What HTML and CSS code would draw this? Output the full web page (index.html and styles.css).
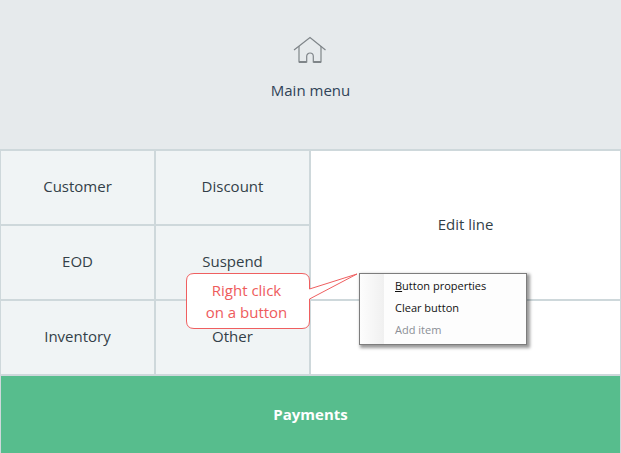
FILE: index.html
```html
<!DOCTYPE html>
<html lang="en">
<head>
  <meta charset="UTF-8" />
  <title>Button layout</title>
  <link rel="stylesheet" href="styles.css">
</head>
<body>

  <div class="grid">
    <div class="tile tile-main">
      <svg class="icono-casa" width="35" height="28" viewBox="0 0 35 28" fill="none">
        <path d="M1 14 L17 1.5 L32.5 14" stroke="#7f8589" stroke-width="1.2"/>
        <path d="M6 10 V26 H13.7 V20.3 A3.3 3.3 0 0 1 20.3 20.3 V26 H28 V10" stroke="#7f8589" stroke-width="1.2"/>
        <path d="M6 26 H13.7 M20.3 26 H28" stroke="#7f8589" stroke-width="1.8"/>
      </svg>
      <span class="tile-label">Main menu</span>
    </div>
    <div class="tile">Customer</div>
    <div class="tile">Discount</div>
    <div class="tile tile-edit">Edit line</div>
    <div class="tile">EOD</div>
    <div class="tile">Suspend</div>
    <div class="tile">Inventory</div>
    <div class="tile">Other</div>
    <div class="tile tile-blank"></div>
    <div class="tile tile-pay">Payments</div>
  </div>

  <div class="callout">
    <svg class="callout-shape" width="174" height="58" viewBox="0 0 174 58" fill="none">
      <path d="M8 0.5 H116 Q123.5 0.5 123.5 8 V16 L171 1 L123.5 26 V48 Q123.5 55.5 116 55.5 H8 Q0.5 55.5 0.5 48 V8 Q0.5 0.5 8 0.5 Z" fill="#fff" stroke="#ef5f60"/>
    </svg>
    <span class="callout-text">Right click<br>on a button</span>
  </div>

  <div class="menu">
    <div class="menu-item"><u>B</u>utton properties</div>
    <div class="menu-item">Clear button</div>
    <div class="menu-item menu-off">Add item</div>
  </div>

</body>
</html>
```

FILE: styles.css
```css
html, body {
  margin: 0;
  padding: 0;
}

body {
  font-family: 'Open Sans', sans-serif;
  width: 621px;
  height: 453px;
  overflow: hidden;
  position: relative;
  color: #333f48;
}

.grid {
  display: grid;
  grid-template-columns: 153px 153px 309px;
  grid-template-rows: 149px 73px 73px 73px 77px;
  gap: 2px;
  padding: 0 1px 0 1px;
  width: 619px;
  height: 453px;
  background: #ced8db;
}

.tile {
  background: #f0f4f5;
  display: flex;
  align-items: center;
  justify-content: center;
  font-size: 15px;
  padding-bottom: 4px;
  box-sizing: border-box;
}

.tile-main {
  grid-column: 1 / 4;
  flex-direction: column;
  justify-content: flex-start;
  background: #e6eaec;
  margin: 0 -1px;
  padding: 36px 0 0;
}

.tile-label {
  margin-top: 16px;
  color: #2f4358;
}

.tile-edit {
  grid-column: 3;
  grid-row: 2 / 4;
  background: #fff;
  padding-bottom: 2px;
}

.tile-blank {
  background: #fff;
}

.tile-pay {
  grid-column: 1 / 4;
  background: #57bd8d;
  color: #fff;
  font-weight: 700;
  padding-bottom: 2px;
}

.callout {
  position: absolute;
  left: 186px;
  top: 273px;
  width: 124px;
  height: 56px;
  padding-right: 3px;
  box-sizing: border-box;
  display: flex;
  align-items: center;
  justify-content: center;
}

.callout-shape {
  position: absolute;
  left: 0;
  top: 0;
}

.callout-text {
  position: relative;
  font-size: 15px;
  line-height: 22px;
  text-align: center;
  color: #ee5b5c;
}

.menu {
  position: absolute;
  left: 359px;
  top: 273px;
  width: 166px;
  height: 69px;
  border: 1px solid #7d7d7d;
  background: linear-gradient(to right, #fdfdfd, #f0f0f0 24px, #fdfdfd 24px);
  box-shadow: 2px 2px 3px 1px rgba(0,0,0,0.4);
  padding-top: 1px;
  box-sizing: content-box;
  font-size: 11px;
  color: #111;
}

.menu-item {
  height: 22px;
  line-height: 22px;
  padding-left: 35px;
}

.menu-off {
  color: #8b8f96;
}
```
